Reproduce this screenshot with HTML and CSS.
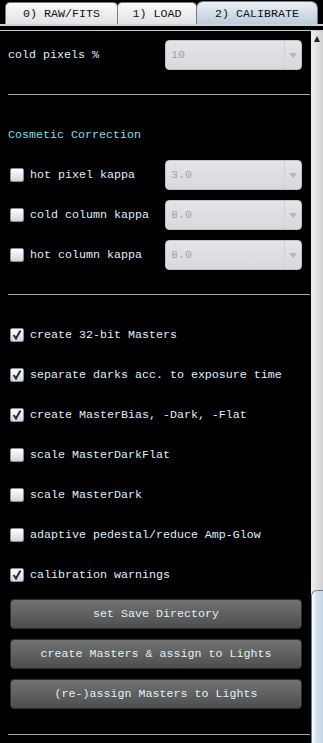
FILE: index.html
```html
<!DOCTYPE html>
<html lang="en">
<head>
    <meta charset="UTF-8">
    <meta name="viewport" content="width=device-width, initial-scale=1.0">
    <title>Calibrate</title>
    <link rel="stylesheet" href="styles.css">
</head>
<body>

    <!-- Tab bar -->
    <div class="tabs">
        <div class="tab tab-raw">0) RAW/FITS</div>
        <div class="tab tab-load">1) LOAD</div>
        <div class="tab tab-active">2) CALIBRATE</div>
    </div>
    <div class="tab-strip"></div>

    <div class="pane">
        <div class="content">
            <div class="combo-row top-row">
                <span class="label">cold pixels %</span>
                <div class="combo"><span>10</span><div class="combo-arrow"></div></div>
            </div>
            <hr class="sep">

            <!-- Cosmetic Correction -->
            <div class="heading">Cosmetic Correction</div>
            <div class="combo-list">
                <div class="combo-row">
                    <label class="check"><span class="box"></span>hot pixel kappa</label>
                    <div class="combo"><span>3.0</span><div class="combo-arrow"></div></div>
                </div>
                <div class="combo-row">
                    <label class="check"><span class="box"></span>cold column kappa</label>
                    <div class="combo"><span>8.0</span><div class="combo-arrow"></div></div>
                </div>
                <div class="combo-row">
                    <label class="check"><span class="box"></span>hot column kappa</label>
                    <div class="combo"><span>8.0</span><div class="combo-arrow"></div></div>
                </div>
            </div>
            <hr class="sep">

            <!-- Master options -->
            <div class="options">
                <label class="check row"><span class="box"><svg viewBox="0 0 12 12"><path d="M2.5 6 L5 9.5 L9.5 1.5"/></svg></span>create 32-bit Masters</label>
                <label class="check row"><span class="box"><svg viewBox="0 0 12 12"><path d="M2.5 6 L5 9.5 L9.5 1.5"/></svg></span>separate darks acc. to exposure time</label>
                <label class="check row"><span class="box"><svg viewBox="0 0 12 12"><path d="M2.5 6 L5 9.5 L9.5 1.5"/></svg></span>create MasterBias, -Dark, -Flat</label>
                <label class="check row"><span class="box"></span>scale MasterDarkFlat</label>
                <label class="check row"><span class="box"></span>scale MasterDark</label>
                <label class="check row"><span class="box"></span>adaptive pedestal/reduce Amp-Glow</label>
                <label class="check row"><span class="box"><svg viewBox="0 0 12 12"><path d="M2.5 6 L5 9.5 L9.5 1.5"/></svg></span>calibration warnings</label>
            </div>

            <div class="buttons">
                <button>set Save Directory</button>
                <button>create Masters &amp; assign to Lights</button>
                <button>(re-)assign Masters to Lights</button>
            </div>
            <hr class="sep last">
        </div>

        <!-- Scrollbar -->
        <div class="scrollbar">
            <div class="scroll-up"></div>
            <div class="scroll-track"></div>
            <div class="scroll-thumb"></div>
        </div>
    </div>

</body>
</html>
```

FILE: styles.css
```css
* {
    margin: 0;
    padding: 0;
    box-sizing: border-box;
}

body {
    font-family: 'Courier New', 'Liberation Mono', monospace;
    font-size: 11.67px;
    background-color: #000;
    color: #dff0ff;
    width: 323px;
    height: 743px;
    overflow: hidden;
}

/* Tabs */
.tabs {
    display: flex;
    align-items: flex-end;
    height: 24px;
    padding-left: 5px;
}

.tab {
    height: 22px;
    border: 1px solid #7a7a7a;
    border-bottom: none;
    border-radius: 5px 5px 0 0;
    background: linear-gradient(#fafafa, #e2e2e2);
    color: #111;
    display: flex;
    align-items: center;
    justify-content: center;
    padding-top: 1px;
}

.tab-raw {
    width: 113px;
}

.tab-load {
    width: 80px;
    margin-left: -1px;
}

.tab-active {
    width: 122px;
    height: 23px;
    margin-left: -1px;
    border-radius: 7px 7px 0 0;
    background: linear-gradient(#eaf0f6, #bccbdb);
}

.tab-strip {
    height: 2px;
    background-color: #c4d0dc;
    margin-bottom: 4px;
}

/* Pane */
.pane {
    display: flex;
    height: 713px;
    border-top: 1px solid #c8c8c8;
}

.content {
    width: 311px;
    padding: 0 0 0 8px;
}

.scrollbar {
    width: 12px;
    position: relative;
    display: flex;
    flex-direction: column;
    background: linear-gradient(to right, #f0f0f0, #d0d0d0);
}

.scroll-up {
    height: 15px;
    position: relative;
}

.scroll-up::after {
    content: '';
    position: absolute;
    left: 3px;
    top: 5px;
    border-left: 3.5px solid transparent;
    border-right: 3.5px solid transparent;
    border-bottom: 6px solid #222;
}

.scroll-track {
    flex: 1;
}

.scroll-thumb {
    position: absolute;
    left: 0;
    right: 0;
    top: 559px;
    bottom: 0;
    border-left: 1px solid #6a7c90;
    border-top: 1px solid #6a7c90;
    border-radius: 6px 0 0 0;
    background: linear-gradient(to right, #ffffff, #d6e2ee 40%, #c3d3e4);
}

/* Combo rows */
.combo-row {
    display: flex;
    align-items: center;
    justify-content: space-between;
    height: 30px;
    padding-right: 9px;
}

.top-row {
    margin-top: 9px;
}

.combo-list {
    display: flex;
    flex-direction: column;
    gap: 10px;
    margin-top: 5px;
}

.combo {
    width: 137px;
    height: 30px;
    border: 1px solid #c0c2c8;
    border-radius: 4px;
    background: linear-gradient(#e3e4e8, #d8d9de);
    color: #a0a0a4;
    display: flex;
    align-items: center;
    padding-left: 5px;
}

.combo span {
    flex: 1;
}

.combo-arrow {
    width: 17px;
    height: 100%;
    border-left: 1px solid #cfd1d6;
    position: relative;
}

.combo-arrow::after {
    content: '';
    position: absolute;
    left: 4px;
    top: 12px;
    border-left: 4px solid transparent;
    border-right: 4px solid transparent;
    border-top: 5px solid #b4b6bc;
}

.sep {
    border: none;
    border-top: 1px solid #a8a8a8;
    margin-top: 24px;
    width: 302px;
}

.sep.last {
    margin-top: 25px;
}

.heading {
    color: #86dde8;
    height: 40px;
    margin-top: 20px;
    display: flex;
    align-items: center;
}

/* Checkboxes */
.check {
    display: flex;
    align-items: center;
}

.box {
    width: 14px;
    height: 14px;
    margin: 0 6px 0 2px;
    border: 1px solid #8a8c92;
    border-radius: 2px;
    background: linear-gradient(#ffffff, #d4d6dc);
    display: flex;
}

.box svg {
    width: 12px;
    height: 12px;
    fill: none;
    stroke: #1c2a44;
    stroke-width: 2;
}

.options {
    margin-top: 20px;
}

.row {
    height: 40px;
}

/* Buttons */
.buttons {
    display: flex;
    flex-direction: column;
    gap: 10px;
    margin-top: 4px;
    padding-left: 2px;
}

button {
    width: 292px;
    height: 30px;
    font-family: inherit;
    font-size: inherit;
    color: #dff0ff;
    border: 1px solid #2e2e2e;
    border-radius: 4px;
    background: linear-gradient(#727272, #4e4e4e);
}
```
